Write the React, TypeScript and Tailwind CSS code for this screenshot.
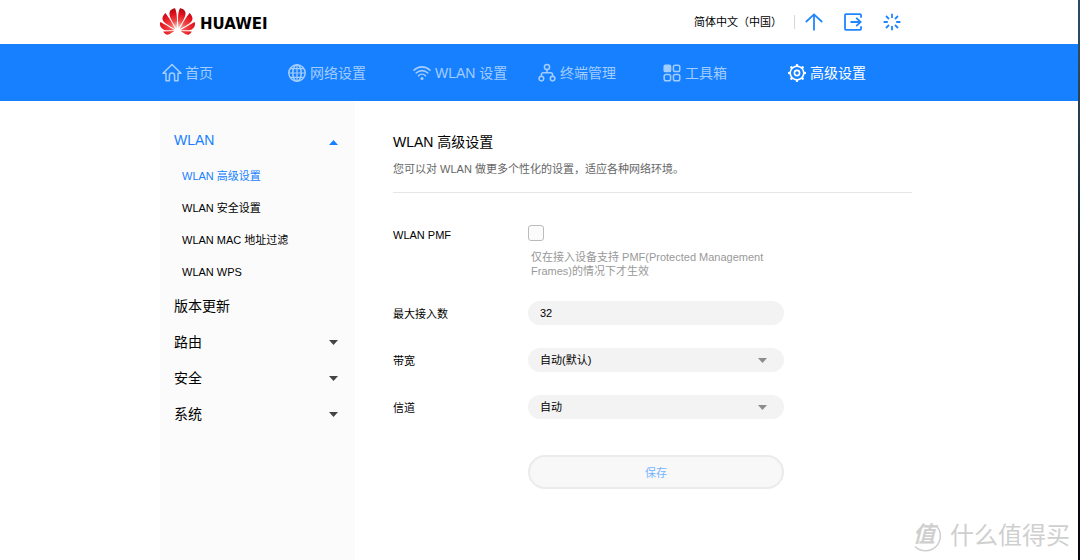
import { useState } from 'react';
import type { ReactNode } from 'react';
import { SiHuawei } from 'react-icons/si';

interface NavItem {
  label: string;
  icon: ReactNode;
  active?: boolean;
}

const iconProps = {
  width: 20,
  height: 20,
  viewBox: '0 0 20 20',
  fill: 'none',
  stroke: 'currentColor',
  strokeWidth: 1.5,
  strokeLinecap: 'round' as const,
  strokeLinejoin: 'round' as const,
  'aria-hidden': true,
};

const HomeIcon = () => (
  <svg {...iconProps}>
    <path d="M1 10.3 L10 1.5 L19 10.3 H16 V17.8 H12.6 V12.5 A2.6 2.6 0 0 0 7.4 12.5 V17.8 H4 V10.3 Z" />
  </svg>
);

const GlobeIcon = () => (
  <svg {...iconProps}>
    <circle cx="10" cy="10" r="8.2" />
    <ellipse cx="10" cy="10" rx="4.2" ry="8.2" />
    <path d="M10 1.8 V18.2 M1.8 10 H18.2 M3.2 5.7 H16.8 M3.2 14.3 H16.8" strokeWidth="1.2" />
  </svg>
);

const WifiIcon = () => (
  <svg {...iconProps} strokeWidth={1.6}>
    <path d="M2 7.2 C6.6 2.8 13.4 2.8 18 7.2" />
    <path d="M4.2 10 C7.5 6.8 12.5 6.8 15.8 10" />
    <path d="M6.5 12.7 C8.5 10.7 11.5 10.7 13.5 12.7" />
    <circle cx="10" cy="15.6" r="1.5" fill="currentColor" stroke="none" />
  </svg>
);

const DevicesIcon = () => (
  <svg {...iconProps}>
    <circle cx="10" cy="4" r="2.6" />
    <circle cx="4.4" cy="15.6" r="2.3" />
    <circle cx="15.6" cy="15.6" r="2.3" />
    <path d="M10 6.6 V9.8 M4.4 13.3 V11.8 Q4.4 9.8 6.4 9.8 H13.6 Q15.6 9.8 15.6 11.8 V13.3" />
  </svg>
);

const ToolsIcon = () => (
  <svg {...iconProps}>
    <rect x="2.2" y="2.2" width="6.4" height="6.4" rx="1.2" fill="currentColor" />
    <rect x="11.4" y="2.2" width="6.4" height="6.4" rx="1.8" />
    <rect x="2.2" y="11.4" width="6.4" height="6.4" rx="1.8" />
    <rect x="11.4" y="11.4" width="6.4" height="6.4" rx="1.8" />
  </svg>
);

const GearIcon = () => (
  <svg {...iconProps} strokeWidth={1.6}>
    <circle cx="10" cy="10" r="6.8" />
    <circle cx="10" cy="10" r="2.6" />
    <path
      strokeWidth={2.6}
      d="M10 2.2 V2.4 M10 17.6 V17.8 M2.2 10 H2.4 M17.6 10 H17.8 M4.4 4.4 L4.5 4.5 M15.5 15.5 L15.6 15.6 M4.4 15.6 L4.5 15.5 M15.5 4.5 L15.6 4.4"
    />
  </svg>
);

const headerIconProps = {
  width: 18,
  height: 18,
  viewBox: '0 0 18 18',
  fill: 'none',
  stroke: 'currentColor',
  strokeWidth: 1.8,
  'aria-hidden': true,
};

const UpdateIcon = () => (
  <svg {...headerIconProps}>
    <path d="M0.8 9 L9 1.4 L17.2 9 M9 1.4 V17.5" />
  </svg>
);

const LogoutIcon = () => (
  <svg {...headerIconProps}>
    <path d="M17 4.8 V2 Q17 1.2 16.2 1.2 H1.8 Q1 1.2 1 2 V16 Q1 16.8 1.8 16.8 H16.2 Q17 16.8 17 16 V13.2" />
    <path d="M6.5 9 H16.6 M12.2 4.8 L16.6 9 L12.2 13.2" />
  </svg>
);

const LoadingIcon = () => (
  <svg {...headerIconProps}>
    <path d="M9 0.8 V5 M9 13 V17.2 M0.6 9 H4.8 M13.2 9 H17.4 M3 3 L6 6 M12 12 L15 15 M3 15 L6 12 M12 6 L15 3" />
  </svg>
);

const Caret = ({ up = false, className = '' }: { up?: boolean; className?: string }) => (
  <svg width="9" height="5" viewBox="0 0 9 5" fill="currentColor" className={className} aria-hidden>
    <path d={up ? 'M0 5 L4.5 0 L9 5 Z' : 'M0 0 L4.5 5 L9 0 Z'} />
  </svg>
);

const navItems: NavItem[] = [
  { label: '首页', icon: <HomeIcon /> },
  { label: '网络设置', icon: <GlobeIcon /> },
  { label: 'WLAN 设置', icon: <WifiIcon /> },
  { label: '终端管理', icon: <DevicesIcon /> },
  { label: '工具箱', icon: <ToolsIcon /> },
  { label: '高级设置', icon: <GearIcon />, active: true },
];

const wlanItems = ['WLAN 高级设置', 'WLAN 安全设置', 'WLAN MAC 地址过滤', 'WLAN WPS'];

const Header = () => (
  <header className="mx-auto flex h-11 w-full max-w-[758px] items-center justify-between pr-[17px]">
    <a href="#" className="flex items-center gap-[5px]" aria-label="HUAWEI">
      <svg width="0" height="0" className="absolute" aria-hidden>
        <radialGradient id="petal" cx="0.5" cy="0.7" r="0.65">
          <stop offset="0" stopColor="#fbc4bc" />
          <stop offset="0.35" stopColor="#f04a48" />
          <stop offset="0.75" stopColor="#e2101c" />
          <stop offset="1" stopColor="#b80d18" />
        </radialGradient>
      </svg>
      <SiHuawei size={35} fill="url(#petal)" className="mb-0.5" />
      <span className="pt-1 font-['DejaVu_Sans',sans-serif] text-[15px] font-bold leading-5 text-black">HUAWEI</span>
    </a>
    <div className="flex items-center text-[#1f86ff]">
      <select aria-label="语言" className="mr-3 appearance-none bg-transparent text-[11px] leading-5 text-black">
        <option>简体中文（中国）</option>
      </select>
      <span className="mr-[10px] h-[14px] w-px bg-gray-300" />
      <div className="flex gap-[21px]">
        <button type="button" aria-label="更新">
          <UpdateIcon />
        </button>
        <button type="button" aria-label="退出">
          <LogoutIcon />
        </button>
        <button type="button" aria-label="刷新">
          <LoadingIcon />
        </button>
      </div>
    </div>
  </header>
);

const Navbar = () => (
  <nav className="bg-[#1780ff]">
    <div className="mx-auto grid h-[57px] max-w-[758px] grid-cols-6 pr-[6px] pl-0.5">
      {navItems.map((item) => (
        <a
          key={item.label}
          href="#"
          className={`flex items-center gap-[3px] whitespace-nowrap text-sm ${item.active ? 'text-white' : 'text-[#a3cdff]'}`}
        >
          {item.icon}
          {item.label}
        </a>
      ))}
    </div>
  </nav>
);

const Sidebar = () => {
  const [open, setOpen] = useState(true);

  return (
    <aside className="w-[195px] shrink-0 bg-[#fbfbfb] pt-[19px] pr-[17px] pl-[14px]">
      <button
        type="button"
        onClick={() => setOpen(!open)}
        className="flex h-10 w-full items-center justify-between text-sm text-[#1780ff]"
      >
        WLAN
        <Caret up={open} className="mt-1" />
      </button>
      {open && (
        <ul className="pl-2 text-[11px]">
          {wlanItems.map((item, i) => (
            <li key={item}>
              <a href="#" className={`flex h-8 items-center ${i === 0 ? 'text-[#1780ff]' : 'text-black'}`}>
                {item}
              </a>
            </li>
          ))}
        </ul>
      )}
      <a href="#" className="flex h-9 items-center text-sm">
        版本更新
      </a>
      {['路由', '安全', '系统'].map((label) => (
        <button key={label} type="button" className="flex h-9 w-full items-center justify-between text-sm">
          {label}
          <Caret className="text-[#444]" />
        </button>
      ))}
    </aside>
  );
};

interface SelectRowProps {
  id: string;
  label: string;
  options: string[];
}

const SelectRow = ({ id, label, options }: SelectRowProps) => (
  <div className="flex items-center">
    <label htmlFor={id} className="w-[135px] shrink-0 pt-0.5">
      {label}
    </label>
    <div className="relative w-64">
      <select id={id} className="block h-6 w-full appearance-none rounded-full bg-[#f3f3f3] px-3 text-[11px] text-black">
        {options.map((o) => (
          <option key={o}>{o}</option>
        ))}
      </select>
      <Caret className="pointer-events-none absolute top-[10px] right-[17px] text-[#8c8c8c]" />
    </div>
  </div>
);

const WlanForm = () => {
  const [maxUsers, setMaxUsers] = useState('32');
  const [pmf, setPmf] = useState(false);

  return (
    <form className="flex flex-col gap-[23px] pt-8 text-[11px]" onSubmit={(e) => e.preventDefault()}>
      <div className="flex items-start">
        <label htmlFor="pmf" className="w-[135px] shrink-0 leading-5">
          WLAN PMF
        </label>
        <div className="w-64">
          <input
            id="pmf"
            type="checkbox"
            checked={pmf}
            onChange={(e) => setPmf(e.target.checked)}
            className="block size-4 appearance-none rounded-[3px] border border-[#bbb] bg-[#fbfbfb] checked:bg-[#1780ff]"
          />
          <p className="mt-[9px] pl-[3px] leading-[14px] text-[#999]">
            仅在接入设备支持 PMF(Protected Management Frames)的情况下才生效
          </p>
        </div>
      </div>
      <div className="flex items-center">
        <label htmlFor="max-users" className="w-[135px] shrink-0 pt-0.5">
          最大接入数
        </label>
        <input
          id="max-users"
          type="text"
          value={maxUsers}
          onChange={(e) => setMaxUsers(e.target.value)}
          className="h-6 w-64 rounded-full bg-[#f3f3f3] px-3 text-[11px] text-black"
        />
      </div>
      <SelectRow id="bandwidth" label="带宽" options={['自动(默认)', '20 MHz', '40 MHz']} />
      <SelectRow id="channel" label="信道" options={['自动', '1', '6', '11']} />
      <button
        type="submit"
        className="mt-[13px] ml-[135px] h-[34px] w-64 rounded-full border-2 border-[#ebebeb] bg-[#f8f8f8] pt-0.5 text-[#74b3ff]"
      >
        保存
      </button>
    </form>
  );
};

const Watermark = () => (
  <div className="pointer-events-none absolute right-2 bottom-2 flex items-center gap-2 text-[#cfcfcf]">
    <svg width="32" height="32" viewBox="0 0 32 32" fill="none" aria-hidden>
      <path d="M26 5.5 A14 14 0 0 1 5 26.5" stroke="currentColor" strokeWidth="1.5" />
      <text
        x="14"
        y="22"
        textAnchor="middle"
        fontSize="22"
        fontWeight="bold"
        fontStyle="italic"
        fill="currentColor"
      >
        值
      </text>
    </svg>
    <span className="text-2xl leading-8">什么值得买</span>
  </div>
);

const App = () => (
  <div className="flex min-h-screen bg-white font-['Liberation_Sans','Noto_Sans_CJK_SC',sans-serif] text-black" lang="zh-CN">
    <div className="relative flex min-w-0 flex-1 flex-col">
      <Header />
      <Navbar />
      <div className="mx-auto flex w-full max-w-[758px] flex-1">
        <Sidebar />
        <main className="min-w-0 flex-1 pt-[31px] pr-[6px] pl-[38px]">
          <h1 className="text-sm leading-5">WLAN 高级设置</h1>
          <p className="mt-[7px] border-b border-[#e6e6e6] pb-[13px] text-[11px] leading-5 text-[#666]">
            您可以对 WLAN 做更多个性化的设置，适应各种网络环境。
          </p>
          <WlanForm />
        </main>
      </div>
      <Watermark />
    </div>
    <div className="w-0.5 shrink-0 bg-linear-to-b from-[#2c4a60] from-10% to-[#05080c] to-70%" />
  </div>
);

export default App;
